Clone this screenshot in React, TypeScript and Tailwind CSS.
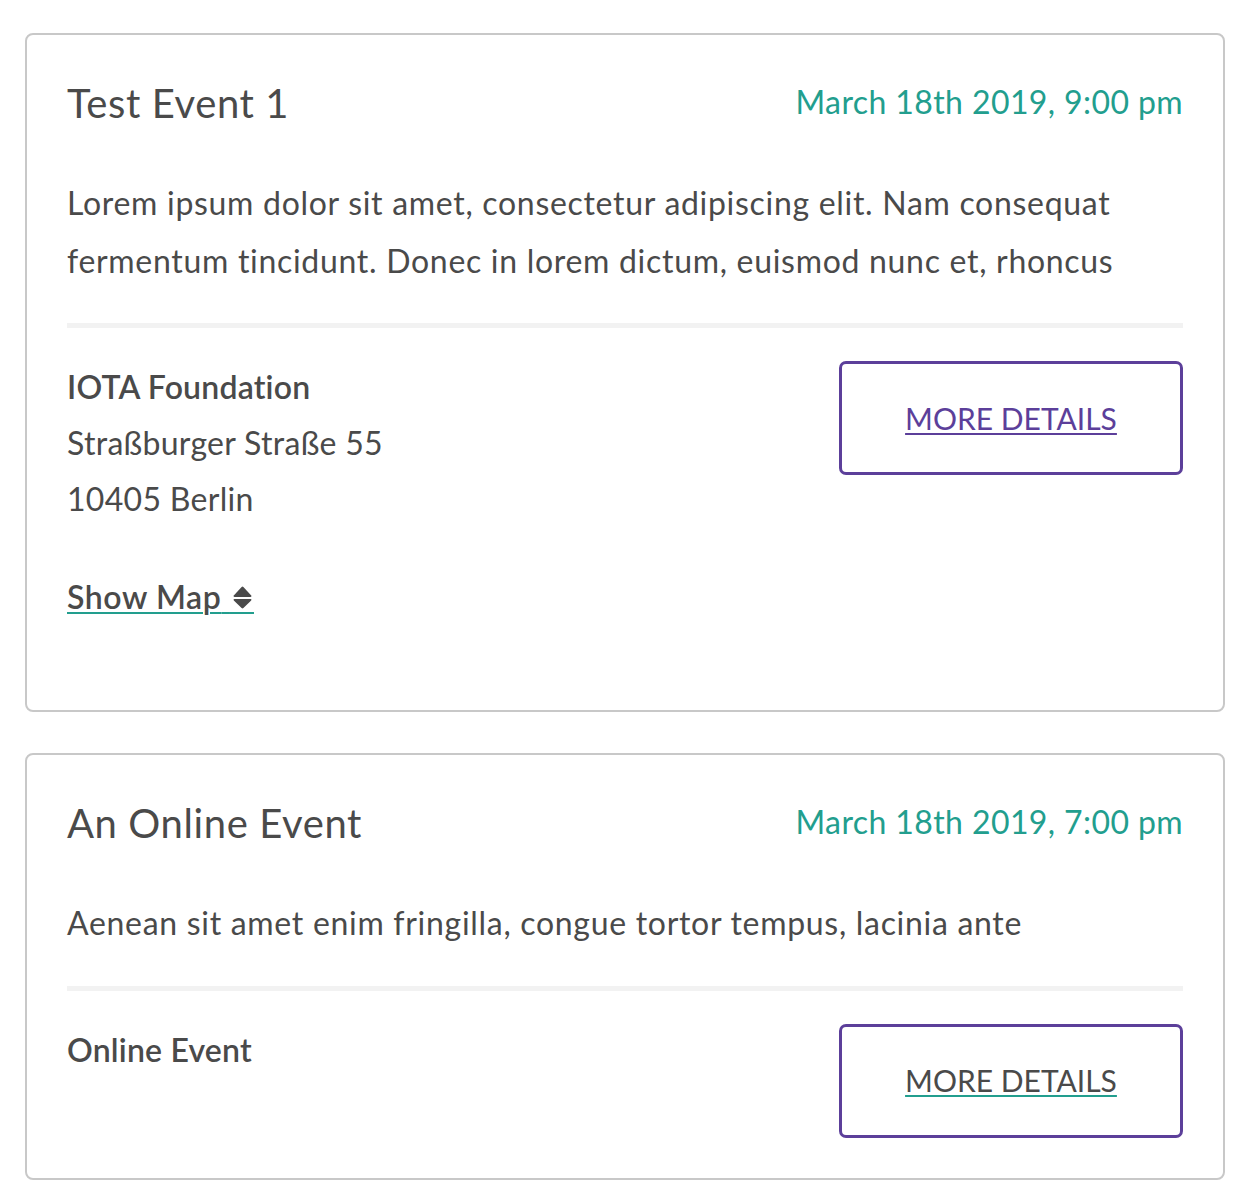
import { ReactNode } from 'react';

interface EventCardProps {
    title: string;
    date: string;
    description: ReactNode;
    location: ReactNode;
    visited?: boolean;
}

function SortIcon() {
    return (
        <svg viewBox="0 0 19 23" className="block w-[19px] h-[23px]" fill="#4a4a4a">
            <path d="M8.6 0.9 Q9.5 0 10.4 0.9 L18.2 9.6 Q19 11 17.5 11 L1.5 11 Q0 11 0.8 9.6 Z" />
            <path d="M1.5 13 L17.5 13 Q19 13 18.2 14.4 L10.4 22.1 Q9.5 23 8.6 22.1 L0.8 14.4 Q0 13 1.5 13 Z" />
        </svg>
    );
}

function EventCard({ title, date, description, location, visited }: EventCardProps) {
    return (
        <div className="border-2 border-[#c8c8c8] rounded-[8px] bg-white px-10 pt-[44px] pb-10">
            <div className="flex items-start justify-between">
                <h2 className="text-[40px] leading-[48px] tracking-[0.6px] text-[#4a4a4a]">{title}</h2>
                <div className="mt-[4px] text-[32px] leading-[38px] tracking-[0.4px] text-[#229e8e]">
                    {date}
                </div>
            </div>
            <p className="mt-[47px] text-[32px] leading-[57.6px] tracking-[0.7px] text-[#4a4a4a]">
                {description}
            </p>
            <div className="mt-[34px] h-[5px] bg-[#f2f2f2]" />
            <div className="mt-[31px] flex items-start justify-between">
                <div className="text-[32px] leading-[56px] tracking-[0.3px] text-[#4a4a4a]">{location}</div>
                <a
                    href="#"
                    className="mt-[2px] flex h-[114px] w-[344px] items-center justify-center rounded-[7px] border-[3px] border-[#5c3f9a]"
                >
                    <span
                        className={
                            visited
                                ? 'text-[30px] text-[#5c3f9a] underline decoration-2 underline-offset-[3px] decoration-[#5c3f9a]'
                                : 'text-[30px] text-[#4a4a4a] underline decoration-2 underline-offset-[3px] decoration-[#229e8e]'
                        }
                    >
                        MORE DETAILS
                    </span>
                </a>
            </div>
        </div>
    );
}

export default function App() {
    return (
        <div
            className="w-[1240px] min-h-[1196px] bg-white pl-[25px] pr-[15px] pt-[33px]"
            style={{ fontFamily: 'Lato, "Noto Sans", sans-serif' }}
        >
            <div className="flex flex-col gap-[41px]">
                <EventCard
                    visited
                    title="Test Event 1"
                    date="March 18th 2019, 9:00 pm"
                    description={
                        <>
                            Lorem ipsum dolor sit amet, consectetur adipiscing elit. Nam consequat
                            <br />
                            fermentum tincidunt. Donec in lorem dictum, euismod nunc et, rhoncus
                        </>
                    }
                    location={
                        <>
                            <div className="font-semibold tracking-[0.2px]">IOTA Foundation</div>
                            <div>Straßburger Straße 55</div>
                            <div>10405 Berlin</div>
                            <div className="mt-[42px] mb-[45px]">
                                <a
                                    href="#"
                                    className="font-semibold tracking-[0.6px] underline decoration-2 underline-offset-[3px] decoration-[#229e8e]"
                                >
                                    Show Map{' '}
                                    <span className="inline-block mb-[-5px] border-b-2 border-[#229e8e] pb-[3px] pl-[3px] pr-[2px]">
                                        <SortIcon />
                                    </span>
                                </a>
                            </div>
                        </>
                    }
                />
                <EventCard
                    title="An Online Event"
                    date="March 18th 2019, 7:00 pm"
                    description="Aenean sit amet enim fringilla, congue tortor tempus, lacinia ante"
                    location={<div className="font-semibold tracking-[0.2px]">Online Event</div>}
                />
            </div>
        </div>
    );
}
